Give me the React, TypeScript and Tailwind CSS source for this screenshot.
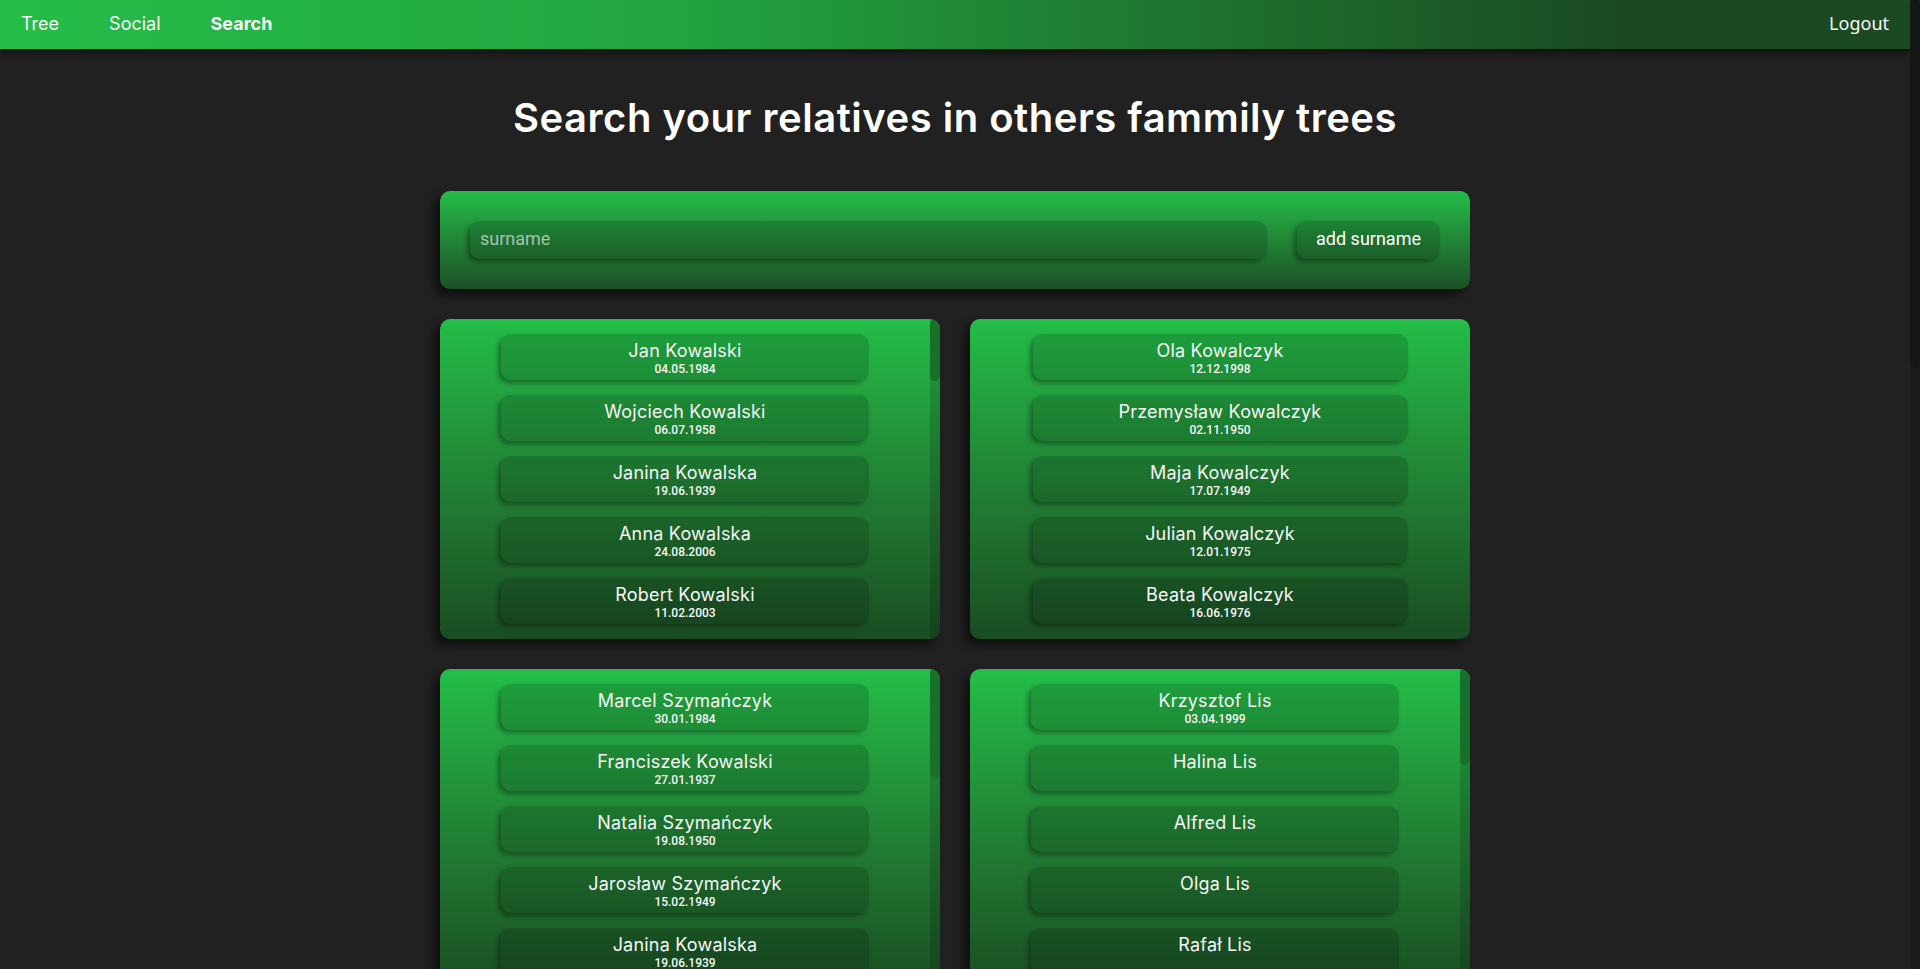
import React from "react";

type Person = { name: string; date?: string };

const panels: { people: Person[]; thumb?: number }[] = [
  {
    thumb: 62,
    people: [
      { name: "Jan Kowalski", date: "04.05.1984" },
      { name: "Wojciech Kowalski", date: "06.07.1958" },
      { name: "Janina Kowalska", date: "19.06.1939" },
      { name: "Anna Kowalska", date: "24.08.2006" },
      { name: "Robert Kowalski", date: "11.02.2003" },
      { name: "Tomasz Kowalski", date: "02.03.1961" },
      { name: "Ewa Kowalska", date: "14.09.1963" },
      { name: "Piotr Kowalski", date: "21.11.1987" },
      { name: "Zofia Kowalska", date: "08.01.1912" },
      { name: "Stanisław Kowalski", date: "30.05.1910" },
      { name: "Maria Kowalska", date: "17.04.1935" },
      { name: "Józef Kowalski", date: "03.12.1933" },
      { name: "Katarzyna Kowalska", date: "25.06.1990" },
      { name: "Marek Kowalski", date: "12.08.1959" },
      { name: "Barbara Kowalska", date: "09.10.1960" },
      { name: "Adam Kowalski", date: "16.02.2010" },
      { name: "Helena Kowalska", date: "28.07.1915" },
      { name: "Andrzej Kowalski", date: "05.03.1956" },
      { name: "Krystyna Kowalska", date: "19.12.1957" },
      { name: "Paweł Kowalski", date: "22.01.1982" },
      { name: "Agnieszka Kowalska", date: "11.11.1985" },
      { name: "Michał Kowalski", date: "07.06.2008" },
      { name: "Teresa Kowalska", date: "13.04.1937" },
      { name: "Kazimierz Kowalski", date: "01.09.1936" },
      { name: "Irena Kowalska", date: "29.03.1940" },
      { name: "Jakub Kowalski", date: "18.05.2012" },
    ],
  },
  {
    people: [
      { name: "Ola Kowalczyk", date: "12.12.1998" },
      { name: "Przemysław Kowalczyk", date: "02.11.1950" },
      { name: "Maja Kowalczyk", date: "17.07.1949" },
      { name: "Julian Kowalczyk", date: "12.01.1975" },
      { name: "Beata Kowalczyk", date: "16.06.1976" },
    ],
  },
  {
    thumb: 109,
    people: [
      { name: "Marcel Szymańczyk", date: "30.01.1984" },
      { name: "Franciszek Kowalski", date: "27.01.1937" },
      { name: "Natalia Szymańczyk", date: "19.08.1950" },
      { name: "Jarosław Szymańczyk", date: "15.02.1949" },
      { name: "Janina Kowalska", date: "19.06.1939" },
      { name: "Lena Szymańczyk", date: "04.04.1986" },
      { name: "Karol Szymańczyk", date: "10.10.1978" },
      { name: "Monika Szymańczyk", date: "23.05.1980" },
      { name: "Henryk Szymańczyk", date: "06.06.1921" },
      { name: "Alicja Szymańczyk", date: "15.09.1924" },
      { name: "Wiktor Szymańczyk", date: "02.02.2011" },
      { name: "Dorota Szymańczyk", date: "27.12.1952" },
      { name: "Edward Szymańczyk", date: "08.08.1947" },
      { name: "Hanna Szymańczyk", date: "13.03.2014" },
      { name: "Leon Szymańczyk", date: "20.11.2016" },
    ],
  },
  {
    thumb: 96,
    people: [
      { name: "Krzysztof Lis", date: "03.04.1999" },
      { name: "Halina Lis" },
      { name: "Alfred Lis" },
      { name: "Olga Lis" },
      { name: "Rafał Lis" },
      { name: "Marta Lis" },
      { name: "Bogdan Lis" },
      { name: "Ewelina Lis" },
      { name: "Roman Lis" },
      { name: "Jadwiga Lis" },
      { name: "Witold Lis" },
      { name: "Iwona Lis" },
      { name: "Czesław Lis" },
      { name: "Renata Lis" },
      { name: "Zbigniew Lis" },
      { name: "Lucyna Lis" },
      { name: "Oskar Lis" },
    ],
  },
  {
    people: [
      { name: "Adam Nowak", date: "14.03.1971" },
      { name: "Ewa Nowak", date: "02.09.1973" },
      { name: "Kamil Nowak", date: "19.01.2001" },
      { name: "Zuzanna Nowak", date: "08.07.2004" },
      { name: "Ryszard Nowak", date: "11.05.1945" },
    ],
  },
  {
    people: [
      { name: "Igor Wiśniewski", date: "21.10.1990" },
      { name: "Marzena Wiśniewska", date: "30.06.1966" },
      { name: "Leszek Wiśniewski", date: "05.12.1964" },
      { name: "Nina Wiśniewska", date: "17.02.2018" },
    ],
  },
  {
    people: [
      { name: "Bartosz Wójcik", date: "09.09.1992" },
      { name: "Kinga Wójcik", date: "12.04.1994" },
      { name: "Grzegorz Wójcik", date: "23.08.1962" },
    ],
  },
  {
    people: [
      { name: "Dawid Kamiński", date: "16.11.1988" },
      { name: "Sylwia Kamińska", date: "03.03.1989" },
      { name: "Jerzy Kamiński", date: "27.07.1958" },
      { name: "Elżbieta Kamińska", date: "01.01.1960" },
    ],
  },
  {
    people: [
      { name: "Mateusz Lewandowski", date: "06.05.1995" },
      { name: "Oliwia Lewandowska", date: "18.10.1997" },
      { name: "Waldemar Lewandowski", date: "29.01.1968" },
    ],
  },
  {
    people: [
      { name: "Szymon Zieliński", date: "25.02.2000" },
      { name: "Natalia Zielińska", date: "14.06.1972" },
      { name: "Jacek Zieliński", date: "07.09.1970" },
      { name: "Wanda Zielińska", date: "22.12.1944" },
    ],
  },
  {
    people: [
      { name: "Łukasz Dąbrowski", date: "10.08.1983" },
      { name: "Paulina Dąbrowska", date: "04.11.1986" },
      { name: "Zenon Dąbrowski", date: "19.03.1951" },
    ],
  },
  {
    people: [
      { name: "Filip Mazur", date: "13.01.2003" },
      { name: "Agata Mazur", date: "26.04.1979" },
      { name: "Tadeusz Mazur", date: "15.10.1948" },
    ],
  },
];

function Card({ person }: { person: Person }) {
  return (
    <div className="w-3/4 h-[46px] shrink-0 rounded-[10px] bg-black/15 shadow-[-3px_3px_5px_rgba(0,0,0,0.35)] flex flex-col items-center pt-[6px] text-[#f7f7f7]">
      <div className="text-[18px] leading-[21px] tracking-[0.2px] font-[Inter,sans-serif] whitespace-nowrap">
        {person.name}
      </div>
      {person.date && (
        <div className="mt-[2px] text-[12px] leading-[13px] font-medium font-[Roboto,sans-serif]">
          {person.date}
        </div>
      )}
    </div>
  );
}

function Panel({ people, thumb }: { people: Person[]; thumb?: number }) {
  return (
    <div className="h-[320px] rounded-[10px] overflow-hidden bg-linear-to-b from-[#23be48] to-[#1a4d23] shadow-[-6px_6px_10px_rgba(0,0,0,0.55)] flex">
      <div className="flex-1 min-w-0 overflow-hidden flex flex-col items-center gap-[15px] pt-[15px]">
        {people.map((p, i) => (
          <Card key={i} person={p} />
        ))}
      </div>
      {thumb !== undefined && (
        <div className="w-[10px] shrink-0 bg-black/15">
          <div className="bg-[#19702b] rounded-[5px]" style={{ height: thumb }} />
        </div>
      )}
    </div>
  );
}

export default function App() {
  return (
    <div className="flex h-screen overflow-hidden bg-[#212121] font-[Inter,sans-serif]">
      <div className="flex-1 min-w-0 overflow-hidden">
        <nav className="h-[49px] flex items-center justify-between px-[21px] pb-[2px] bg-[linear-gradient(90deg,#25bd48_0%,#22a540_35%,#1b4a22_85%)] shadow-[0_3px_8px_rgba(0,0,0,0.6)] text-[#f7f7f7] text-[18px] relative z-10">
          <div className="flex items-center gap-[50px]">
            <span>Tree</span>
            <span>Social</span>
            <span className="font-bold">Search</span>
          </div>
          <span className="font-['Noto_Sans',sans-serif]">Logout</span>
        </nav>

        <h1 className="text-center text-[40px] leading-[48px] font-semibold text-white mt-[45px] mb-[49px] tracking-[0.5px]">
          Search your relatives in others fammily trees
        </h1>

        <div className="w-[1030px] mx-auto pb-[162px]">
          <div className="rounded-[10px] bg-linear-to-b from-[#23be48] to-[#1b5126] shadow-[-6px_6px_10px_rgba(0,0,0,0.55)] p-[30px] flex gap-[30px]">
            <div className="flex-1 h-[38px] rounded-[10px] bg-black/15 shadow-[-3px_3px_5px_rgba(0,0,0,0.35)] flex items-center px-[10px] pb-[4px] text-[18px] text-[#a9c2ab] font-[Roboto,sans-serif]">
              surname
            </div>
            <div className="h-[38px] rounded-[10px] bg-black/15 shadow-[-3px_3px_5px_rgba(0,0,0,0.35)] flex items-center px-[19px] pb-[4px] text-[18px] text-white font-[Roboto,sans-serif]">
              add surname
            </div>
          </div>

          <div className="grid grid-cols-2 gap-[30px] mt-[30px]">
            {panels.map((p, i) => (
              <Panel key={i} people={p.people} thumb={p.thumb} />
            ))}
          </div>
        </div>
      </div>
      <div className="w-[10px] shrink-0 bg-[#1c1c1c]">
        <div className="h-[368px] bg-[#161616] rounded-[5px]" />
      </div>
    </div>
  );
}
